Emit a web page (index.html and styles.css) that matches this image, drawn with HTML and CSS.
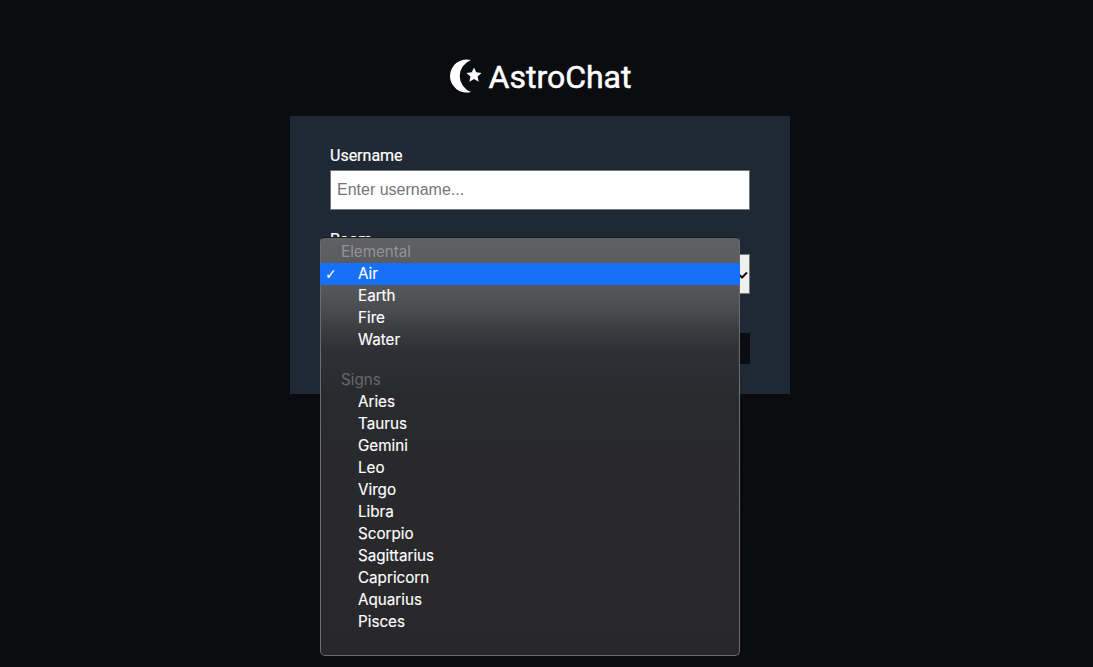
FILE: index.html
```html
<!DOCTYPE html>
<html lang="en">
<head>
<meta charset="utf-8">
<title>AstroChat</title>
<link rel="stylesheet" href="styles.css">
</head>
<body>
<main class="page">
  <header class="brand">
    <svg class="brand-icon" viewBox="0 0 34 34" width="34" height="34" aria-hidden="true">
      <path fill="#fff" d="M22 1A16.6 16.6 0 1 0 22 33A17 17 0 0 1 22 1Z"/>
      <path fill="#fff" d="M25 8.5l2.2 4.8 5.3.6-3.9 3.6 1 5.2-4.6-2.6-4.6 2.6 1-5.2-3.9-3.6 5.3-.6Z"/>
    </svg>
    <h1 class="brand-name">AstroChat</h1>
  </header>
  <form class="card">
    <div class="field">
      <label class="label">Username</label>
      <div class="input">Enter username...</div>
    </div>
    <div class="field field-room">
      <label class="label">Room</label>
      <div class="select">
        <svg class="chev" viewBox="0 0 12 8" width="12" height="8" aria-hidden="true"><path d="M1 1.5l5 5 5-5" fill="none" stroke="#111" stroke-width="2"/></svg>
      </div>
      <div class="menu">
        <div class="group">Elemental</div>
        <div class="option selected"><span class="check">✓</span>Air</div>
        <div class="option">Earth</div>
        <div class="option">Fire</div>
        <div class="option">Water</div>
        <div class="spacer"></div>
        <div class="group group-dim">Signs</div>
        <div class="option">Aries</div>
        <div class="option">Taurus</div>
        <div class="option">Gemini</div>
        <div class="option">Leo</div>
        <div class="option">Virgo</div>
        <div class="option">Libra</div>
        <div class="option">Scorpio</div>
        <div class="option">Sagittarius</div>
        <div class="option">Capricorn</div>
        <div class="option">Aquarius</div>
        <div class="option">Pisces</div>
      </div>
    </div>
    <div class="submit"></div>
  </form>
</main>
</body>
</html>
```
FILE: styles.css
```css
* { box-sizing: border-box; }
html, body { margin: 0; height: 100%; }
body {
  background: #0a0c10;
  color: #fff;
  font-family: Roboto, "Liberation Sans", sans-serif;
  overflow: hidden;
}
.page { width: 1080px; }
.brand {
  height: 116px;
  padding-top: 59px;
  display: flex;
  justify-content: center;
  align-items: flex-start;
  gap: 6px;
}
.brand-icon { display: block; }
.brand-name {
  margin: 0;
  font-size: 32px;
  line-height: 36px;
  font-weight: 400;
  -webkit-text-stroke: 0.5px #fff;
}
.card {
  width: 500px;
  height: 278px;
  margin: 0 auto;
  padding: 30px 40px 0;
  background: #1f2935;
}
.field { margin-bottom: 20px; }
.field-room { position: relative; }
.label {
  display: block;
  height: 24px;
  font-size: 16px;
  line-height: 20px;
  font-weight: 400;
  -webkit-text-stroke: 0.2px #fff;
}
.input {
  height: 40px;
  padding-left: 6px;
  background: #fff;
  border: 1px solid #767676;
  color: #757575;
  font-size: 16px;
  line-height: 37px;
  font-family: "Liberation Sans", sans-serif;
}
.select {
  height: 40px;
  background: #efefef;
  border: 1px solid #767676;
  display: flex;
  align-items: center;
  justify-content: flex-end;
  padding-right: 1px;
}
.chev { display: block; margin-top: 2px; }
.submit {
  height: 31px;
  margin-top: 39px;
  background: #0a0c10;
}
.menu {
  position: absolute;
  left: -10px;
  top: 7px;
  width: 420px;
  height: 419px;
  padding-top: 3px;
  border: 1px solid #6a6c6f;
  border-top-color: #1a1c1e;
  border-radius: 5px;
  background: linear-gradient(#5f6164 0, #55575a 48px, #4b4d51 70px, #3a3c40 92px, #2f3035 112px, #292a2e 160px, #28282a 100%);
  font-family: Inter, Roboto, sans-serif;
  font-size: 15.2px;
  line-height: 22px;
}
.option { position: relative; height: 22px; padding-left: 37px; color: #fff; white-space: nowrap; -webkit-text-stroke: 0.15px #fff; }
.selected { background: #1770f8; margin: 0 -1px; padding-left: 38px; }
.check {
  position: absolute;
  left: 5px;
  top: 0;
  font-size: 14px;
  font-family: "DejaVu Sans", sans-serif;
  -webkit-text-stroke: 0;
}
.group { height: 22px; padding-left: 20px; color: #929496; }
.group-dim { color: #66686b; }
.spacer { height: 18px; }
```
